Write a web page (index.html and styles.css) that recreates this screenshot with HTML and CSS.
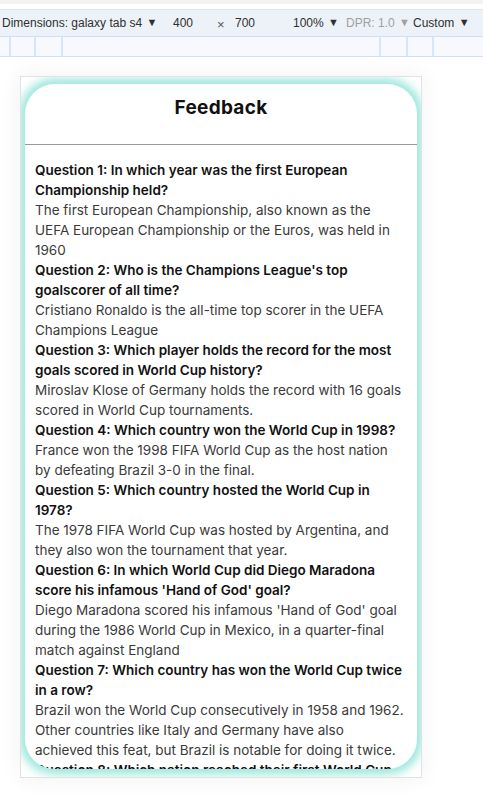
FILE: index.html
```html
<!DOCTYPE html>
<html lang="en">
<head>
<meta charset="utf-8">
<title>Feedback</title>
<link rel="stylesheet" href="styles.css">
</head>
<body>
<div class="devtools">
  <div class="topstrip"></div>
  <div class="toolbar">
    <span class="item dim">Dimensions: galaxy tab s4 <span class="caret">▼</span></span>
    <span class="item n1">400</span>
    <span class="item times">×</span>
    <span class="item n2">700</span>
    <span class="item zoom">100% <span class="caret">▼</span></span>
    <span class="item dpr">DPR: 1.0 <span class="caret">▼</span></span>
    <span class="item custom">Custom <span class="caret">▼</span></span>
  </div>
  <div class="ruler">
    <span class="seg s1"></span>
    <span class="seg s2"></span>
    <span class="seg s3"></span>
    <span class="seg s4"></span>
    <span class="seg s5"></span>
    <span class="seg s6"></span>
    <span class="seg s7"></span>
  </div>
</div>
<div class="stage">
  <div class="device">
    <div class="card">
      <h2 class="title">Feedback</h2>
      <div class="content">
        <p class="q">Question 1: In which year was the first European Championship held?</p>
        <p class="a">The first European Championship, also known as the UEFA European Championship or the Euros, was held in 1960</p>
        <p class="q">Question 2: Who is the Champions League's top goalscorer of all time?</p>
        <p class="a">Cristiano Ronaldo is the all-time top scorer in the UEFA Champions League</p>
        <p class="q">Question 3: Which player holds the record for the most goals scored in World Cup history?</p>
        <p class="a">Miroslav Klose of Germany holds the record with 16 goals scored in World Cup tournaments.</p>
        <p class="q">Question 4: Which country won the World Cup in 1998?</p>
        <p class="a">France won the 1998 FIFA World Cup as the host nation by defeating Brazil 3-0 in the final.</p>
        <p class="q">Question 5: Which country hosted the World Cup in 1978?</p>
        <p class="a">The 1978 FIFA World Cup was hosted by Argentina, and they also won the tournament that year.</p>
        <p class="q">Question 6: In which World Cup did Diego Maradona score his infamous 'Hand of God' goal?</p>
        <p class="a">Diego Maradona scored his infamous 'Hand of God' goal during the 1986 World Cup in Mexico, in a quarter-final match against England</p>
        <p class="q">Question 7: Which country has won the World Cup twice in a row?</p>
        <p class="a">Brazil won the World Cup consecutively in 1958 and 1962. Other countries like Italy and Germany have also achieved&nbsp;this feat, but Brazil is notable for doing it twice.</p>
        <p class="q">Question 8: Which nation reached their first World Cup final in 2018?</p>
        <p class="a">Croatia reached their first World Cup final in 2018, where they lost to France 4-2.</p>
      </div>
    </div>
  </div>
</div>
</body>
</html>
```
FILE: styles.css
```css
html, body {
  margin: 0;
  padding: 0;
  background: #ffffff;
}
body {
  width: 483px;
  height: 806px;
  overflow: hidden;
}
.devtools {
  font-family: "Liberation Sans", Arial, sans-serif;
  font-size: 12px;
  color: #303030;
}
.topstrip {
  height: 4px;
  background: #f3f3f3;
  border-bottom: 5px solid #ffffff;
}
.toolbar {
  height: 26px;
  background: #edf1f8;
  border-top: 1px solid #dfe3ea;
  border-bottom: 1px solid #cfe0f6;
  display: flex;
  align-items: center;
  white-space: nowrap;
  padding-left: 2px;
}
.item {
  display: inline-block;
  flex: none;
}
.caret {
  font-size: 11px;
  position: relative;
  top: -1px;
  margin-left: 1px;
}
.dim { width: 171px; }
.n1 { width: 44px; }
.times { width: 18px; color: #555; font-size: 13px; position: relative; top: 1px; }
.n2 { width: 58px; }
.zoom { width: 53px; }
.dpr { width: 67px; color: #a0a0a0; }
.custom { width: 70px; }
.ruler {
  height: 19px;
  background: #f7f9fe;
  border-bottom: 1px solid #cfe0f6;
  display: flex;
}
.seg {
  border-right: 2px solid #d6e5f8;
  height: 100%;
}
.s1 { width: 9px; }
.s2 { width: 23px; }
.s3 { width: 25px; }
.s4 { width: 316px; }
.s5 { width: 25px; }
.s6 { width: 24px; }
.s7 { flex: 1; border-right: none; }

.stage {
  padding: 19px 0 0 20px;
}
.device {
  border: 1px solid #e2e2e2;
  box-shadow: 0 0 22px rgba(0, 0, 0, 0.06);
  background: #ffffff;
  overflow: hidden;
  padding: 7px 4px 0 4px;
  box-sizing: content-box;
  height: 693px;
  width: 392px;
}
.card {
  width: 392px;
  height: 685px;
  background: #ffffff;
  border-radius: 30px;
  box-shadow: 0 0 8px 6px #a2e9df;
  overflow: hidden;
  font-family: Inter, "Open Sans", sans-serif;
}
.title {
  margin: 0;
  padding: 12px 0 24px;
  font-size: 19px;
  letter-spacing: 0.3px;
  line-height: 24px;
  font-weight: 700;
  text-align: center;
  color: #111111;
  border-bottom: 1px solid #9a9a9a;
}
.content {
  padding: 15px 10px 0 10px;
  font-size: 13.5px;
  line-height: 20px;
}
.content p {
  margin: 0;
}
.q {
  font-weight: 600;
  color: #111111;
}
.a {
  font-weight: 400;
  color: #3a3a3a;
}
```
